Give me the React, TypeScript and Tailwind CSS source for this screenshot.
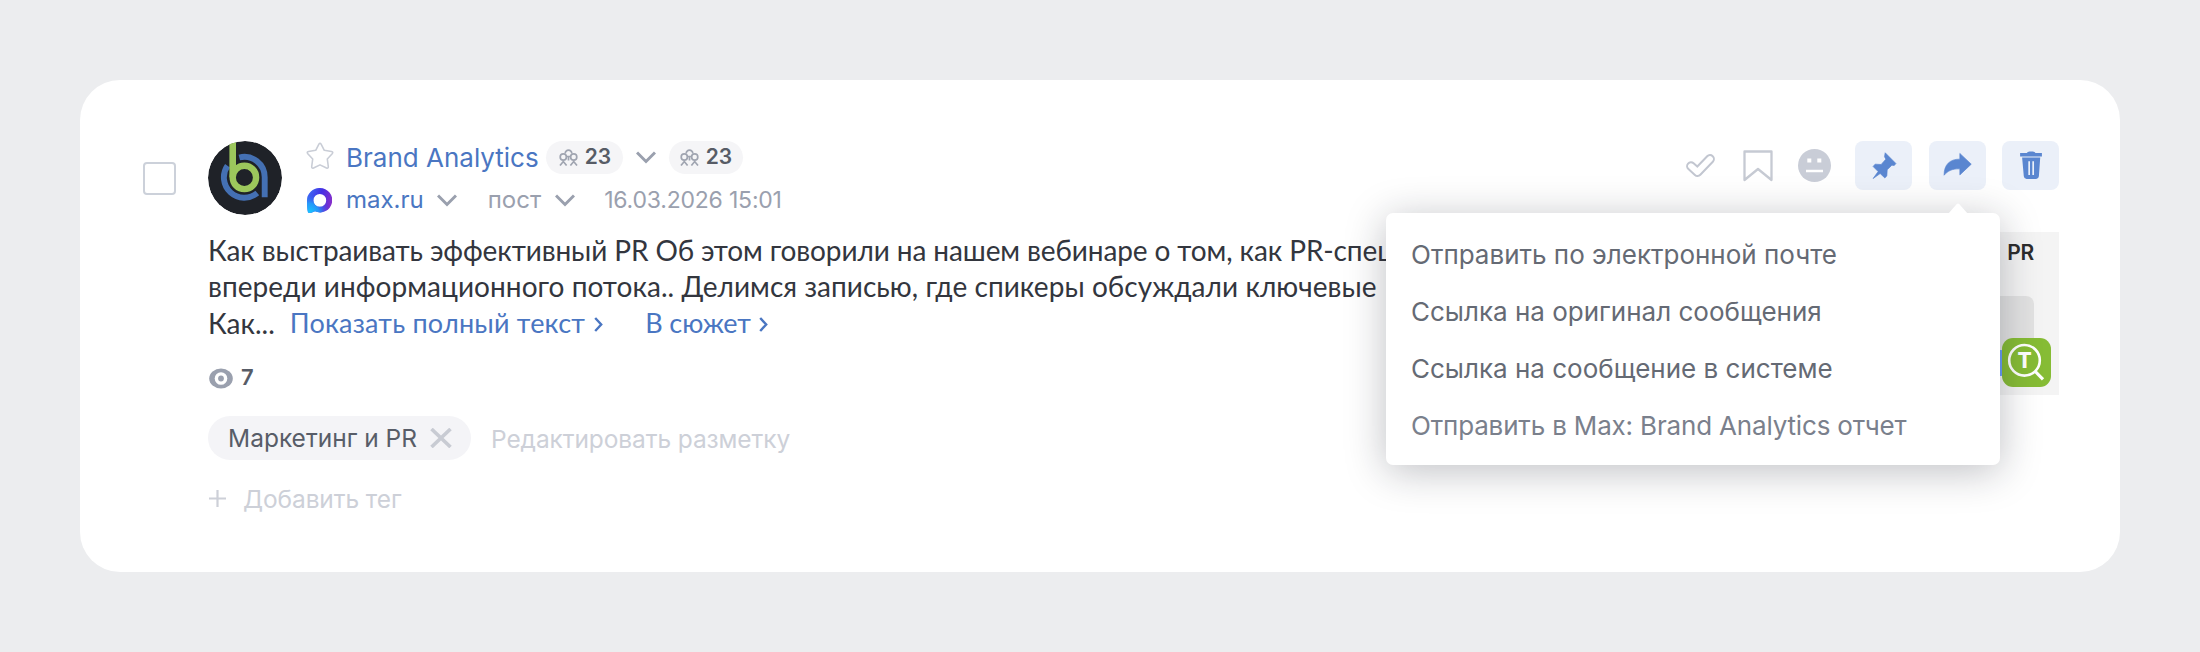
const BrandLogo = () => (
    <svg className="w-[74px] h-[74px] shrink-0 rounded-full" viewBox="0 0 74 74" fill="none">
        <circle cx="37" cy="37" r="37" fill="#1f2228" />
        <path d="M31.3 16.5A20.4 20.4 0 0 1 56.7 36.3V56.3" stroke="#4470b3" strokeWidth="5.9" />
        <path d="M19.5 24.7A20.4 20.4 0 0 0 49.3 52" stroke="#4470b3" strokeWidth="5.9" />
        <path d="M24.7 0V36.3" stroke="#9cc75c" strokeWidth="6.6" />
        <circle cx="36.4" cy="36.4" r="11.7" stroke="#9cc75c" strokeWidth="6.4" />
    </svg>
)

const MaxLogo = () => (
    <svg className="w-[25px] h-[25px] shrink-0" viewBox="0 0 25 25">
        <defs>
            <linearGradient id="mx" x1="0" y1="0.35" x2="1" y2="0.6">
                <stop offset="0" stopColor="#3f6df5" />
                <stop offset="0.5" stopColor="#4430e4" />
                <stop offset="1" stopColor="#8a2fc9" />
            </linearGradient>
            <radialGradient id="mxc" cx="0.1" cy="1" r="0.85">
                <stop offset="0" stopColor="#15c9ff" />
                <stop offset="0.45" stopColor="#22a4fb" stopOpacity="0.85" />
                <stop offset="1" stopColor="#4430e4" stopOpacity="0" />
            </radialGradient>
        </defs>
        <path fillRule="evenodd" fill="url(#mx)" d="M13 0a12.2 12.2 0 1 1-5 23.3C6 24.5 3.4 25.2 1 24.6.2 21 0 16.5 0 12.5A12.6 12.6 0 0 1 13 0Zm-.2 6a6.4 6.4 0 1 0 0 12.8 6.4 6.4 0 0 0 0-12.8Z" />
        <path fillRule="evenodd" fill="url(#mxc)" d="M13 0a12.2 12.2 0 1 1-5 23.3C6 24.5 3.4 25.2 1 24.6.2 21 0 16.5 0 12.5A12.6 12.6 0 0 1 13 0Zm-.2 6a6.4 6.4 0 1 0 0 12.8 6.4 6.4 0 0 0 0-12.8Z" />
    </svg>
)

const StarIcon = () => (
    <svg className="w-7 h-7 shrink-0" viewBox="0 0 28 28" fill="none" stroke="#c9cdd6" strokeWidth="1.6" strokeLinejoin="round">
        <path d="M12.9 2.2Q14 .4 15.1 2.2L18.3 8.3 25.5 9.5Q27.6 10 26.2 11.7L21.3 17 22.3 24.5Q22.4 26.7 20.5 26L14 22.9 7.5 26Q5.6 26.7 5.7 24.5L6.7 17 1.8 11.7Q.4 10 2.5 9.5L9.7 8.3Z" />
    </svg>
)

const ChevronDown = () => (
    <svg className="w-5 h-[13px] shrink-0" viewBox="0 0 20 13" fill="none" stroke="#9aa0ae" strokeWidth="3">
        <path d="M1 1.5 10 10.5 19 1.5" />
    </svg>
)

const ChevronRight = () => (
    <svg className="inline-block w-[9px] h-[15px]" viewBox="0 0 9 15" fill="none" stroke="#4a76c2" strokeWidth="2.4">
        <path d="M1.2 1 7.2 7.5 1.2 14" />
    </svg>
)

const GroupIcon = () => (
    <svg className="w-[19px] h-[17px] shrink-0" viewBox="0 0 19 17" fill="none" stroke="#a0a5b1" strokeWidth="1.7">
        <path d="M6.2 4.4a3.3 3.3 0 1 1 6.6 0" />
        <circle cx="4.3" cy="8" r="3.1" />
        <circle cx="14.7" cy="8" r="3.1" />
        <path d="M1 16.5 4.3 12.5 7.6 16.5M11.4 16.5 14.7 12.5 18 16.5M9.5 7v4.5M7.5 7.5h4" />
    </svg>
)

const menu = [
    "Отправить по электронной почте",
    "Ссылка на оригинал сообщения",
    "Ссылка на сообщение в системе",
]

const ShareMenu = () => (
    <div className="absolute z-10 top-[133px] left-[1306px] w-[614px] h-[252px] pt-[12.5px] pl-[25px] bg-white rounded-[7px] shadow-[0_6px_40px_rgba(20,25,40,0.28)]">
        <svg className="absolute -top-[10px] right-[32px] w-5 h-[11px]" viewBox="0 0 20 11" fill="#fff">
            <path d="M0 11 8.8 1Q10 0 11.2 1L20 11Z" />
        </svg>
        {menu.map((item) => (
            <div key={item} className="h-[57px] flex items-center text-[26px] text-[#656a74]">{item}</div>
        ))}
        <div className="h-[57px] flex items-center text-[26px] tracking-[-0.17px] text-[#7a808c]">Отправить в Max: Brand Analytics отчет</div>
    </div>
)

const Actions = () => (
    <div className="flex items-center h-[49px] ml-auto">
        <svg className="w-[29px] h-[23px]" viewBox="0 0 29 23" fill="none" strokeLinecap="round" strokeLinejoin="round">
            <path d="M5 12.2 11.5 18 24 5" stroke="#c2c6d0" strokeWidth="9.8" />
            <path d="M5 12.2 11.5 18 24 5" stroke="#fff" strokeWidth="5.8" />
        </svg>
        <svg className="w-[30px] h-8 ml-7" viewBox="0 0 30 32" fill="none" stroke="#c6cad3" strokeWidth="2.3" strokeLinejoin="round">
            <path d="M1.5 1.5h27v28.5L15 19 1.5 30Z" />
        </svg>
        <svg className="w-[33px] h-[33px] ml-[25px]" viewBox="0 0 33 33">
            <circle cx="16.5" cy="16.5" r="16.5" fill="#c9cdd7" />
            <path d="M9.3 9.5h4v4h-4ZM19.3 9.5h4v4h-4ZM8 20.7h17v2.6H8Z" fill="#fff" />
        </svg>
        <div className="ml-6 w-[57px] h-[49px] rounded-lg bg-[#ebf0f9]">
            <svg className="w-[57px] h-[49px]" viewBox="0 0 170 146" fill="#5a86d0" stroke="#5a86d0" strokeWidth="2" strokeLinejoin="round">
                <path d="M90 35 122 67 117 73 110 72 96 86 95 104 89 110 75 97 54 112 69 91 54 76 60 69 78 70 92 54 88 47Z" />
            </svg>
        </div>
        <div className="ml-[17px] w-[57px] h-[49px] rounded-lg bg-[#ebf0f9]">
            <svg className="w-[57px] h-[49px]" viewBox="0 0 170 146" fill="#5a86d0" stroke="#5a86d0" strokeWidth="2" strokeLinejoin="round">
                <path d="M45 102C45 70 62 54 92 54V37L126 69 92 101V83C70 82 56 89 45 102Z" />
            </svg>
        </div>
        <div className="ml-[16px] w-[57px] h-[49px] rounded-lg bg-[#ebf0f9]">
            <svg className="w-[57px] h-[49px]" viewBox="0 0 170 146" fill="#5a86d0">
                <path d="M54 36H74Q76 31 82 31H92Q98 31 100 36H119V46H54ZM60 49H114L110 105Q109 113 102 113H73Q66 113 65 105Z" />
                <path d="M81 60V101M93 60V101" stroke="#ebf0f9" strokeWidth="5" />
            </svg>
        </div>
    </div>
)

const Preview = () => (
    <div className="relative w-[290px] h-[163px] shrink-0 mt-px bg-[#f4f4f4] overflow-hidden">
        <div className="pt-[7px] pr-[25px] text-right text-[21px] leading-7 tracking-[-0.3px] font-semibold text-[#2d2d2d]">PR</div>
        <div className="mt-[29px] mr-[25px] h-[76px] rounded-tr-lg rounded-br-lg bg-[#e2e2e2]"></div>
        <div className="absolute left-[200px] top-[118px] w-[36px] h-[26px] bg-[#6a9cf8] rounded"></div>
        <svg className="absolute right-2 top-[106px] w-[49px] h-[49px]" viewBox="0 0 49 49" fill="none">
            <rect width="49" height="49" rx="11" fill="#86bc35" />
            <circle cx="22.5" cy="22.3" r="15.3" stroke="#fff" strokeWidth="2.6" />
            <path d="M33.3 33.5 41 41.3" stroke="#fff" strokeWidth="3.2" />
            <text x="22.5" y="30" textAnchor="middle" fill="#fff" className="font-['Inter'] font-extrabold text-[21px]">T</text>
        </svg>
    </div>
)

const App = () => {

    return (
        <div className="w-[2200px] h-[652px] p-20 bg-[#ecedef] font-['Inter',sans-serif] overflow-hidden">
            <div className="relative flex w-[2040px] h-[492px] bg-white rounded-[40px]">
                <div className="w-[128px] shrink-0 pl-[62.5px] pt-[82px]">
                    <div className="w-[33px] h-[33px] border-2 border-[#ccd1da] rounded-[4px]"></div>
                </div>
                <div className="flex-1 min-w-0 pt-[61px] pr-[61px]">
                    <div className="flex h-[74px]">
                        <BrandLogo />
                        <div className="ml-6 flex flex-col gap-[9px]">
                            <div className="flex items-center h-[33px]">
                                <div className="-mt-1"><StarIcon /></div>
                                <span className="ml-3 text-[26px] text-[#4a76c2]">Brand Analytics</span>
                                <div className="ml-[7px] flex items-center h-[33px] w-[77px] pl-[13px] bg-[#f5f5f7] rounded-full">
                                    <GroupIcon />
                                    <span className="ml-[7px] -mt-0.5 text-[21px] font-semibold text-[#575c66]">23</span>
                                </div>
                                <div className="mx-[13px]"><ChevronDown /></div>
                                <div className="flex items-center h-[33px] w-[74px] pl-[11px] bg-[#f5f5f7] rounded-full">
                                    <GroupIcon />
                                    <span className="ml-[7px] -mt-0.5 text-[21px] font-semibold text-[#575c66]">23</span>
                                </div>
                            </div>
                            <div className="mt-px flex items-center h-[33px] text-2xl text-[#9aa0ae]">
                                <div className="ml-px"><MaxLogo /></div>
                                <span className="ml-[14px] text-[#4a76c2]">max.ru</span>
                                <div className="ml-[13px]"><ChevronDown /></div>
                                <span className="ml-[31px]">пост</span>
                                <div className="ml-[14px]"><ChevronDown /></div>
                                <span className="ml-[29px] text-[23px] tracking-[-0.2px]">16.03.2026 15:01</span>
                            </div>
                        </div>
                        <Actions />
                    </div>
                    <div className="mt-4 flex justify-between">
                        <div className="w-[1500px] shrink-0">
                            <div className="pt-px font-['Lato',sans-serif] text-[28px] leading-[36.3px] whitespace-nowrap text-[#33363e]">
                                <p className="tracking-[-0.11px]">Как выстраивать эффективный PR Об этом говорили на нашем вебинаре о том, как PR-спец</p>
                                <p className="tracking-[0.05px]">впереди информационного потока.. Делимся записью, где спикеры обсуждали ключевые</p>
                                <p className="flex">
                                    <span>Как...</span>
                                    <span className="ml-[15px] text-[27px] tracking-[0.2px] text-[#4a76c2]">Показать полный текст</span>
                                    <span className="ml-[9px] -mt-0.5"><ChevronRight /></span>
                                    <span className="ml-[42px] text-[27px] tracking-[-0.1px] text-[#4a76c2]">В сюжет</span>
                                    <span className="ml-2 -mt-0.5"><ChevronRight /></span>
                                </p>
                            </div>
                            <div className="mt-[25px] flex items-center h-[26px]">
                                <svg className="w-6 h-[21px] ml-px" viewBox="0 0 24 21">
                                    <ellipse cx="12" cy="10.5" rx="11.8" ry="10" fill="#9aa0ae" />
                                    <circle cx="12" cy="10.5" r="6.3" fill="#fff" />
                                    <circle cx="12" cy="10.5" r="2.9" fill="#9aa0ae" />
                                </svg>
                                <span className="ml-2 -mt-0.5 text-[22px] font-semibold text-[#575c66]">7</span>
                            </div>
                            <div className="mt-6 flex items-center h-11">
                                <div className="flex items-center h-11 w-[263px] pl-5 bg-[#f4f4f7] rounded-full">
                                    <span className="pt-px text-[24.5px] text-[#585d68]">Маркетинг и PR</span>
                                    <svg className="ml-[13px] w-[22px] h-5" viewBox="0 0 22 20" fill="none" stroke="#c8cbd3" strokeWidth="3.6">
                                        <path d="M1.5 1 20.5 19M20.5 1 1.5 19" />
                                    </svg>
                                </div>
                                <span className="ml-5 pt-0.5 text-[24.5px] tracking-[-0.1px] text-[#cdd0d8]">Редактировать разметку</span>
                            </div>
                            <div className="mt-6 flex items-center h-[30px]">
                                <svg className="ml-px w-[17px] h-[17px]" viewBox="0 0 17 17" stroke="#cdd0d8" strokeWidth="2.2">
                                    <path d="M0 8.5H17M8.5 0V17" />
                                </svg>
                                <span className="ml-[17px] pt-px text-[24.5px] tracking-[-0.1px] text-[#cdd0d8]">Добавить тег</span>
                            </div>
                        </div>
                        <Preview />
                    </div>
                </div>
                <ShareMenu />
            </div>
        </div>
    )
}

export default App
